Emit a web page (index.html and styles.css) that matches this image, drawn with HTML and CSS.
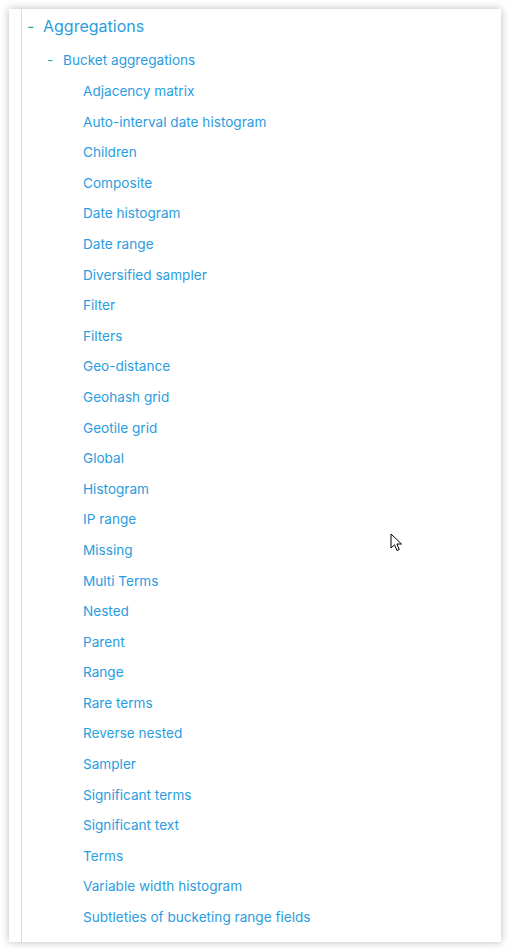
FILE: index.html
```html
<!DOCTYPE html>
<html>
<head>
<meta charset="utf-8">
<link rel="stylesheet" href="styles.css">
</head>
<body>
<div class="panel">
  <div class="tree">
    <div class="row lvl1"><span class="dash">-</span><a>Aggregations</a></div>
    <div class="row lvl2"><span class="dash">-</span><a>Bucket aggregations</a></div>
    <ul class="items">
      <li>Adjacency matrix</li>
      <li>Auto-interval date histogram</li>
      <li>Children</li>
      <li>Composite</li>
      <li>Date histogram</li>
      <li>Date range</li>
      <li>Diversified sampler</li>
      <li>Filter</li>
      <li>Filters</li>
      <li>Geo-distance</li>
      <li>Geohash grid</li>
      <li>Geotile grid</li>
      <li>Global</li>
      <li>Histogram</li>
      <li>IP range</li>
      <li>Missing</li>
      <li>Multi Terms</li>
      <li>Nested</li>
      <li>Parent</li>
      <li>Range</li>
      <li>Rare terms</li>
      <li>Reverse nested</li>
      <li>Sampler</li>
      <li>Significant terms</li>
      <li>Significant text</li>
      <li>Terms</li>
      <li>Variable width histogram</li>
      <li>Subtleties of bucketing range fields</li>
    </ul>
  </div>
</div>
<svg class="cursor" width="14" height="20" viewBox="0 0 14 20"><path d="M1 1 L1 15 L4.5 11.8 L7 17.5 L9.3 16.5 L6.9 11 L11.5 11 Z" fill="#fff" stroke="#000" stroke-width="1" stroke-linejoin="miter"/></svg>
</body>
</html>
```

FILE: styles.css
```css
html, body {
  margin: 0;
  padding: 0;
  background: #fff;
}
body {
  width: 509px;
  height: 950px;
  position: relative;
  overflow: hidden;
  font-family: Inter, "Noto Sans", sans-serif;
}
.panel {
  margin: 9px 0 0 9px;
  width: 492px;
  height: 933px;
  background: #fff;
  box-shadow: 0 0 8px rgba(0,0,0,0.28);
  display: flex;
}
.tree {
  margin-left: 12px;
  border-left: 1px solid #dcdcdc;
  flex: 1;
  padding-top: 5px;
}
.row {
  display: flex;
  align-items: baseline;
  color: #2a9de0;
}
.dash {
  color: #19b3a6;
}
.lvl1 {
  font-size: 16px;
  line-height: 24px;
  padding-left: 5px;
}
.lvl1 .dash { width: 16px; }
.lvl2 {
  font-size: 13.6px;
  line-height: 20px;
  padding-left: 25px;
  margin-top: 12px;
}
.lvl2 .dash { width: 16px; }
.items {
  list-style: none;
  margin: 0;
  padding: 0 0 0 61px;
  font-size: 13.6px;
  line-height: 30.6px;
  color: #2a9de0;
  margin-top: 6px;
}
.cursor {
  position: absolute;
  left: 390px;
  top: 533px;
}
```
